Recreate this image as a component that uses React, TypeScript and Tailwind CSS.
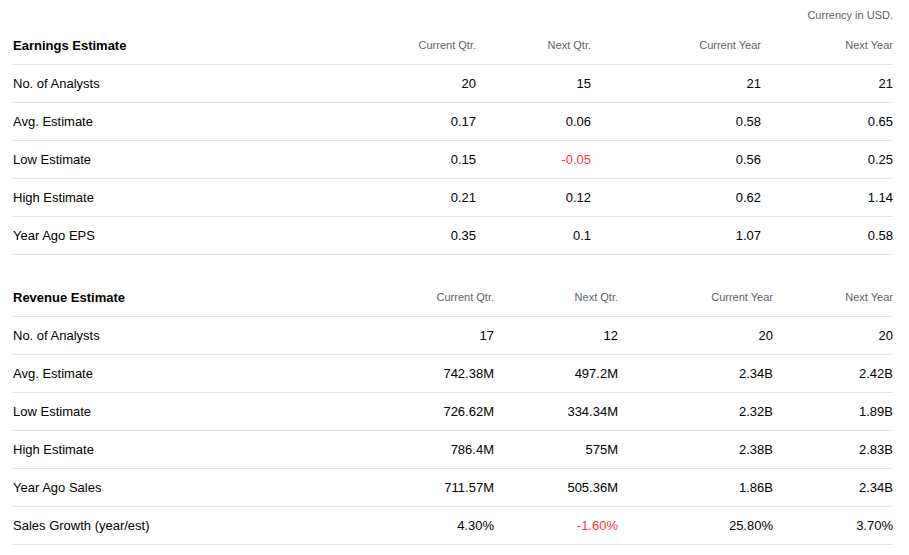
import React from 'react';

type Row = { label: string; values: string[] };

const earnings: Row[] = [
  { label: 'No. of Analysts', values: ['20', '15', '21', '21'] },
  { label: 'Avg. Estimate', values: ['0.17', '0.06', '0.58', '0.65'] },
  { label: 'Low Estimate', values: ['0.15', '-0.05', '0.56', '0.25'] },
  { label: 'High Estimate', values: ['0.21', '0.12', '0.62', '1.14'] },
  { label: 'Year Ago EPS', values: ['0.35', '0.1', '1.07', '0.58'] },
];

const revenue: Row[] = [
  { label: 'No. of Analysts', values: ['17', '12', '20', '20'] },
  { label: 'Avg. Estimate', values: ['742.38M', '497.2M', '2.34B', '2.42B'] },
  { label: 'Low Estimate', values: ['726.62M', '334.34M', '2.32B', '1.89B'] },
  { label: 'High Estimate', values: ['786.4M', '575M', '2.38B', '2.83B'] },
  { label: 'Year Ago Sales', values: ['711.57M', '505.36M', '1.86B', '2.34B'] },
  { label: 'Sales Growth (year/est)', values: ['4.30%', '-1.60%', '25.80%', '3.70%'] },
];

const columns = ['Current Qtr.', 'Next Qtr.', 'Current Year', 'Next Year'];

function EstimateTable({ title, rows, grid }: { title: string; rows: Row[]; grid: string }) {
  return (
    <div>
      {/* Header */}
      <div className={`grid ${grid} h-[38px] items-center border-b border-[#e0e4e9]`}>
        <span className="text-[13px] font-bold text-black">{title}</span>
        {columns.map((c) => (
          <span key={c} className="text-right text-[11px] text-[#5b636a]">
            {c}
          </span>
        ))}
      </div>

      {rows.map((row) => (
        <div key={row.label} className={`grid ${grid} h-[38px] items-center border-b border-[#e0e4e9]`}>
          <span className="text-[13px] text-black">{row.label}</span>
          {row.values.map((v, i) => (
            <span
              key={i}
              className={`text-right text-[13px] ${v.startsWith('-') ? 'text-[#ff333a]' : 'text-black'}`}
            >
              {v}
            </span>
          ))}
        </div>
      ))}
    </div>
  );
}

export default function App() {
  return (
    <div className="min-h-screen bg-white px-[13px] pr-[16px] font-['Liberation_Sans',Arial,sans-serif]">
      <div className="flex h-[27px] items-center justify-end pt-[4px] text-[11px] text-[#5b636a]">
        Currency in USD.
      </div>

      <EstimateTable
        title="Earnings Estimate"
        rows={earnings}
        grid="grid-cols-[343px_120px_115px_170px_132px]"
      />

      <div className="h-[24px]" />

      <EstimateTable
        title="Revenue Estimate"
        rows={revenue}
        grid="grid-cols-[361px_120px_124px_155px_120px]"
      />
    </div>
  );
}
